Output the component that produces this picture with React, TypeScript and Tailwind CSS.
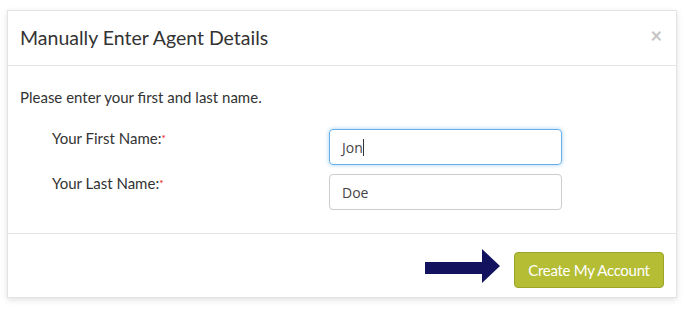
export default function App() {
  return (
    <div className="min-h-screen bg-white pt-[10px] px-[7px]" style={{ fontFamily: 'Lato, "Open Sans", sans-serif' }}>
      <div className="w-[670px] bg-white border border-[#e3e3e3] shadow-[0_2px_6px_rgba(0,0,0,0.12)]">
        {/* Header */}
        <div className="h-[55px] flex items-center justify-between pl-[12px] pr-[14px] border-b border-[#e5e5e5]">
          <h2 className="text-[19.5px] text-[#333]">Manually Enter Agent Details</h2>
          <span className="text-[20px] leading-none text-[#c4c4c4] font-bold -mt-[6px]">×</span>
        </div>

        {/* Body */}
        <div className="pl-[12px] pt-[22px] pb-[23px] border-b border-[#e5e5e5]">
          <p className="text-[15px] text-[#333] leading-[18px]">Please enter your first and last name.</p>
          <div className="mt-[23px] grid grid-cols-[277px_233px] gap-y-[9px] pl-[32px]">
            <label className="leading-[18px] text-[15px] text-[#333]">
              Your First Name:<span className="text-[#e00] text-[10px] align-top">*</span>
            </label>
            <div className="h-[36px] rounded-[4px] border border-[#66afe9] shadow-[0_0_4px_rgba(102,175,233,0.6)] flex items-center px-[12px] text-[14px] text-[#444]" style={{ fontFamily: '"Open Sans", sans-serif' }}>
              Jon<span className="inline-block w-px h-[17px] bg-[#333]" />
            </div>
            <label className="leading-[18px] text-[15px] text-[#333]">
              Your Last Name:<span className="text-[#e00] text-[10px] align-top">*</span>
            </label>
            <div className="h-[36px] rounded-[4px] border border-[#ccc] flex items-center px-[12px] text-[14px] text-[#444]" style={{ fontFamily: '"Open Sans", sans-serif' }}>
              Doe
            </div>
          </div>
        </div>

        {/* Footer */}
        <div className="flex items-start justify-end gap-[14px] pt-[18px] pb-[9px] pr-[12px]">
          <svg width="75" height="34" viewBox="0 0 75 34" className="-mt-[3px]">
            <polygon points="0,13 57,13 57,0 75,17 57,34 57,25 0,25" fill="#13125e" />
          </svg>
          <button className="h-[36px] w-[150px] rounded-[4px] bg-[#b4bd34] border border-[#9da42a] text-white text-[15px] tracking-[-0.3px]">
            Create My Account
          </button>
        </div>
      </div>
    </div>
  );
}
